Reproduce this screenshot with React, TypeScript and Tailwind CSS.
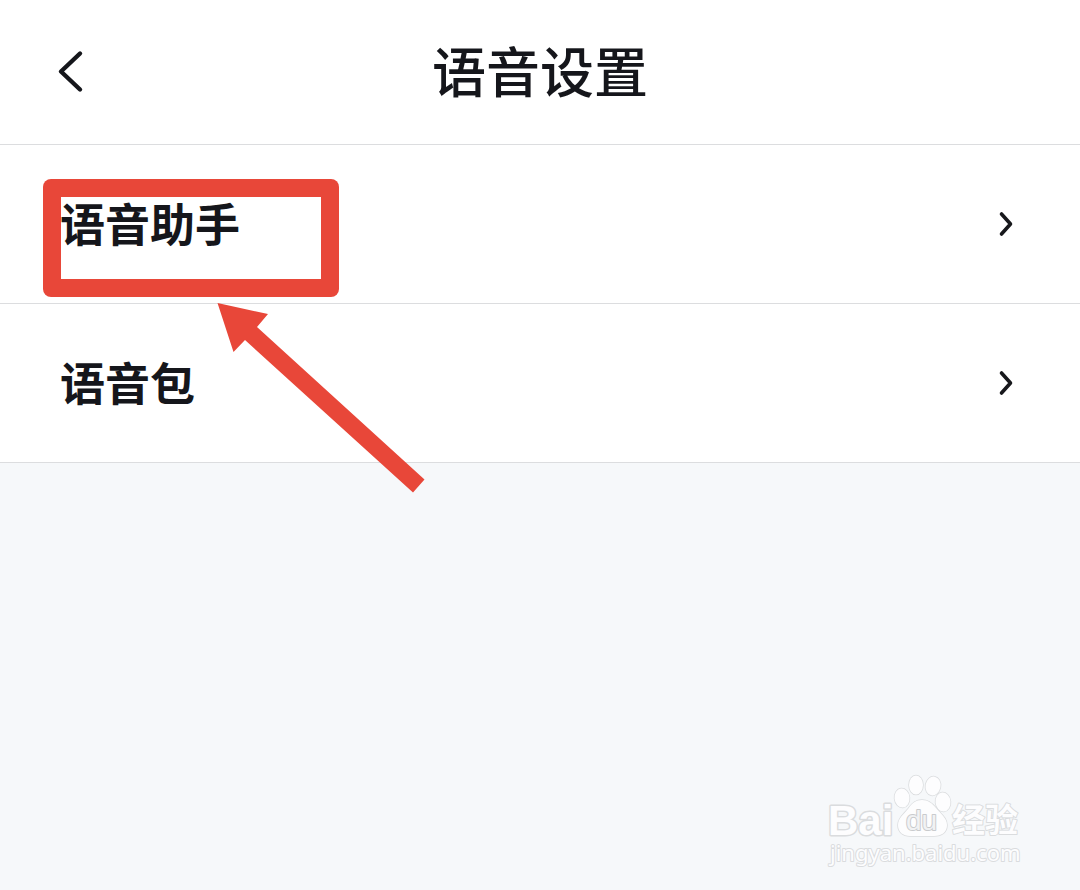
const ROWS = ['语音助手', '语音包'];

function Chevron() {
  return (
    <svg className="h-7 w-4" viewBox="0 0 16 28" fill="none" stroke="#17181c" strokeWidth="3.6" strokeLinecap="round" strokeLinejoin="round" aria-hidden="true">
      <path d="M3.5 4 12.5 14 3.5 24" />
    </svg>
  );
}

function Highlight() {
  return (
    <>
      <span className="pointer-events-none absolute top-[34px] left-[43px] h-[118px] w-[296px] rounded-lg bg-[#e84739]" />
      <span className="pointer-events-none absolute top-[52px] left-[61px] h-[82px] w-[260px] bg-white" />
    </>
  );
}

function Arrow() {
  return (
    <svg className="pointer-events-none absolute top-[158px] left-[217px] z-10 h-[190px] w-[208px]" viewBox="0 0 208 190" aria-hidden="true">
      <path fill="#e84739" d="M0.5 0 51 11 40 24 207.5 176.5 196 189.5 28 37 16.5 49Z" />
    </svg>
  );
}

function Watermark() {
  return (
    <svg
      className="h-[110px] w-[220px]"
      viewBox="0 0 220 110"
      fill="#fdfdfe"
      stroke="#dadcde"
      strokeWidth="2"
      strokeLinejoin="round"
      style={{ paintOrder: 'stroke' }}
    >
      <text x="13" y="70" fontSize="42" fontWeight="700" fontFamily="Liberation Sans, sans-serif" strokeWidth="3">Bai</text>
      <g strokeWidth="1.5">
        <ellipse cx="87" cy="33" rx="7.5" ry="9.5" transform="rotate(-6 87 33)" />
        <ellipse cx="101" cy="20" rx="7" ry="9.5" />
        <ellipse cx="118" cy="21" rx="7.5" ry="9.5" transform="rotate(10 118 21)" />
        <ellipse cx="128" cy="37" rx="7.5" ry="9.5" transform="rotate(-6 128 37)" />
        <path d="M107 35C101 35 97 38 93 44C89 49 83 53 83 60C83 67 88 71 95 71L119 71C127 71 132 67 132 60C132 53 126 49 121 43C117 38 113 35 107 35Z" />
      </g>
      <text x="91" y="65" fontSize="28" fontFamily="Liberation Sans, sans-serif" fill="#f1f2f4" stroke="#c9cbcd">du</text>
      <text x="137" y="67" fontSize="33" fontWeight="700" fontFamily="Noto Sans CJK SC, sans-serif">经验</text>
      <text x="15" y="96" fontSize="22" strokeWidth="2" fontFamily="Noto Sans, sans-serif">jingyan.baidu.com</text>
    </svg>
  );
}

export default function App() {
  return (
    <div className="relative flex min-h-screen flex-col bg-[#f6f8fa] font-['Noto_Sans_CJK_SC',sans-serif] text-[#15161b]">
      {/* Header */}
      <header className="grid h-[145px] grid-cols-[1fr_auto_1fr] items-center border-b border-[#dcdddf] bg-white px-14">
        <button type="button" aria-label="返回" className="w-8">
          <svg className="h-11 w-8" viewBox="0 0 32 44" fill="none" stroke="#15161b" strokeWidth="4.4" strokeLinecap="round" strokeLinejoin="round" aria-hidden="true">
            <path d="M24 3.5 5 21.5 24 39.5" />
          </svg>
        </button>
        <h1 className="pb-1 text-[54px] leading-none font-medium">语音设置</h1>
      </header>

      {/* Settings list */}
      <main className="relative">
        <ul>
          {ROWS.map((label, i) => (
            <li key={label} className="relative border-b border-[#dcdddf] bg-white">
              {i === 0 && <Highlight />}
              <button type="button" className="relative flex h-[158px] w-full items-center justify-between pr-[66px] pl-[60px]">
                <span className="pb-1 text-[45px] leading-none font-bold">{label}</span>
                <Chevron />
              </button>
            </li>
          ))}
        </ul>
        <Arrow />
      </main>

      <footer className="mt-auto flex justify-end pr-[45px] pb-[15px]">
        <Watermark />
      </footer>
    </div>
  );
}
